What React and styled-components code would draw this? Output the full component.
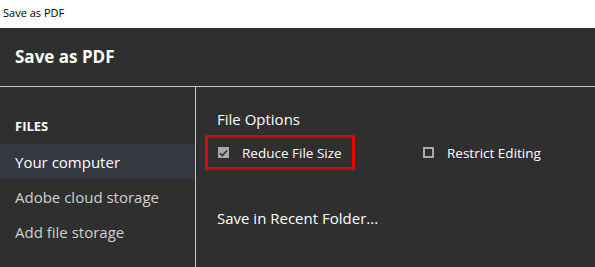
import React from 'react';
import styled, { createGlobalStyle } from 'styled-components';

const GlobalStyle = createGlobalStyle`
  html, body {
    margin: 0;
    padding: 0;
    background: #2f2f2f;
  }
  body {
    font-family: "Segoe UI", "Open Sans", "Liberation Sans", sans-serif;
  }
`;

const places = ['Your computer', 'Adobe cloud storage', 'Add file storage'];

export default function App() {
  return (
    <>
      <GlobalStyle />
      <Window>
        <TitleBar>Save as PDF</TitleBar>
        <Header>Save as PDF</Header>
        <Body>
          <Sidebar>
            <SectionLabel>FILES</SectionLabel>
            {places.map((p, i) => (
              <NavItem key={p} active={i === 0}>{p}</NavItem>
            ))}
          </Sidebar>
          <Content>
            <Heading>File Options</Heading>
            <OptionsRow>
              <Highlight>
                <Option>
                  <Box checked>
                    <svg width="9" height="8" viewBox="0 0 9 8">
                      <path d="M1 4.2 L3.4 6.5 L8 1.5" fill="none" stroke="#2f2f2f" strokeWidth="1.6" />
                    </svg>
                  </Box>
                  Reduce File Size
                </Option>
              </Highlight>
              <Option>
                <Box />
                Restrict Editing
              </Option>
            </OptionsRow>
            <RecentLink>Save in Recent Folder...</RecentLink>
          </Content>
        </Body>
      </Window>
    </>
  );
}

const Window = styled.div`
  width: 595px;
  height: 267px;
  display: flex;
  flex-direction: column;
  background: #2f2f2f;
  overflow: hidden;
`;

const TitleBar = styled.div`
  height: 28px;
  background: #fff;
  color: #000;
  font-size: 11px;
  padding: 5px 0 0 3px;
  box-sizing: border-box;
`;

const Header = styled.div`
  height: 59px;
  display: flex;
  align-items: center;
  padding: 0 15px 2px;
  box-sizing: border-box;
  color: #fff;
  font-size: 17px;
  font-weight: 700;
  border-bottom: 1px solid #c8c8c8;
`;

const Body = styled.div`
  flex: 1;
  display: flex;
`;

const Sidebar = styled.div`
  width: 195px;
  border-right: 1px solid #c8c8c8;
  padding-top: 30px;
`;

const SectionLabel = styled.div`
  font-size: 13px;
  font-weight: 700;
  color: #fff;
  padding: 0 15px;
  height: 27px;
  line-height: 18px;
`;

const NavItem = styled.div`
  height: 35px;
  display: flex;
  align-items: center;
  padding: 0 15px;
  font-size: 15px;
  color: ${props => props.active ? '#ffffff' : '#d0d0d0'};
  background: ${props => props.active ? '#333841' : 'transparent'};
`;

const Content = styled.div`
  flex: 1;
  padding: 21px 0 0 9px;
`;

const Heading = styled.div`
  font-size: 15px;
  color: #fff;
  padding-left: 12px;
  height: 27px;
  line-height: 22px;
`;

const OptionsRow = styled.div`
  display: flex;
  align-items: center;
`;

const Highlight = styled.div`
  width: 150px;
  height: 35px;
  box-sizing: border-box;
  border: 3px solid #e00000;
  display: flex;
  align-items: center;
  padding-left: 10px;
  margin-right: 68px;
`;

const Option = styled.div`
  display: flex;
  align-items: center;
  gap: 13px;
  font-size: 13.5px;
  color: #fff;
`;

const Box = styled.div`
  width: 11px;
  height: 11px;
  box-sizing: border-box;
  display: flex;
  align-items: center;
  justify-content: center;
  background: ${props => props.checked ? '#a9a9a9' : 'transparent'};
  border: ${props => props.checked ? 'none' : '2px solid #a9a9a9'};
`;

const RecentLink = styled.div`
  font-size: 15px;
  color: #fff;
  padding-left: 12px;
  margin-top: 38px;
`;
